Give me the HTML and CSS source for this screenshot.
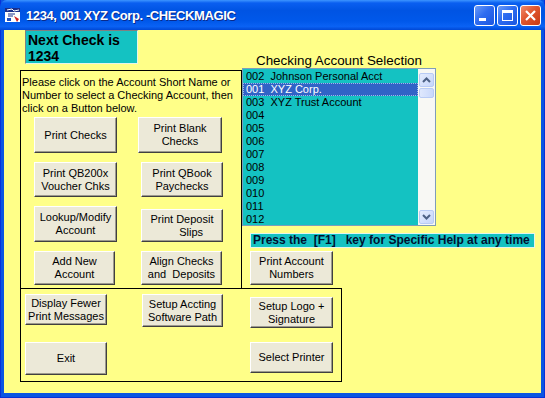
FILE: index.html
```html
<!DOCTYPE html>
<html lang="en">
<head>
    <meta charset="UTF-8">
    <title>1234, 001 XYZ Corp. -CHECKMAGIC</title>
    <link rel="stylesheet" href="styles.css">
</head>
<body>
    <div class="window">
        <header class="titlebar">
            <svg class="app-icon" width="16" height="16" viewBox="0 0 16 16">
                <rect x="0" y="1" width="15" height="14" fill="#ffffff"/>
                <rect x="0" y="1" width="15" height="4" fill="#1a2f8a"/>
                <path d="M2 3 L7 2 L9 4 L14 3" stroke="#ffffff" stroke-width="1" fill="none"/>
                <path d="M3 7 L10 7 M3 9 L8 9" stroke="#1a2f8a" stroke-width="1"/>
                <path d="M9 9 L12 15 L14 12 Z" fill="#d02020"/>
                <rect x="2" y="11" width="4" height="3" fill="#2050c0"/>
            </svg>
            <span class="title">1234, 001 XYZ Corp. -CHECKMAGIC</span>
            <div class="caption-buttons">
                <div class="cap-btn"><span class="glyph-min"></span></div>
                <div class="cap-btn"><span class="glyph-max"></span></div>
                <div class="cap-btn close">
                    <svg width="13" height="13" viewBox="0 0 13 13"><path d="M2 2 L11 11 M11 2 L2 11" stroke="#ffffff" stroke-width="2.2"/></svg>
                </div>
            </div>
        </header>

        <main class="client">
            <div class="top-row">
                <div class="next-check">Next Check is<br>1234</div>
                <div class="list-caption">Checking Account Selection</div>
            </div>

            <div class="middle-row">
                <section class="group upper">
                    <p class="hint">Please click on the Account Short Name or<br>Number to select a Checking Account, then<br>click on a Button below.</p>
                    <div class="btn-grid">
                        <button class="btn w83 h36">Print Checks</button>
                        <button class="btn w84 h36 shift-l">Print Blank<br>Checks</button>
                        <button class="btn w83 h35">Print QB200x<br>Voucher Chks</button>
                        <button class="btn w82 h35">Print QBook<br>Paychecks</button>
                        <button class="btn w83 h36">Lookup/Modify<br>Account</button>
                        <button class="btn w82 h33 down3">Print Deposit<br>&nbsp;&nbsp;&nbsp;&nbsp;&nbsp;&nbsp;Slips</button>
                        <button class="btn w81 h34">Add New<br>Account</button>
                        <button class="btn w81 h34">Align Checks<br>and&nbsp; Deposits</button>
                    </div>
                </section>

                <div class="account-side">
                    <div class="listbox">
                        <ul class="accounts">
                            <li>002  Johnson Personal Acct</li>
                            <li class="selected">001  XYZ Corp.</li>
                            <li>003  XYZ Trust Account</li>
                            <li>004</li>
                            <li>005</li>
                            <li>006</li>
                            <li>007</li>
                            <li>008</li>
                            <li>009</li>
                            <li>010</li>
                            <li>011</li>
                            <li>012</li>
                        </ul>
                        <div class="scrollbar">
                            <div class="scroll-btn">
                                <svg width="9" height="6" viewBox="0 0 9 6"><path d="M1 5 L4.5 1.5 L8 5" stroke="#4d6185" stroke-width="2" fill="none"/></svg>
                            </div>
                            <div class="scroll-thumb"></div>
                            <div class="scroll-track"></div>
                            <div class="scroll-btn">
                                <svg width="9" height="6" viewBox="0 0 9 6"><path d="M1 1 L4.5 4.5 L8 1" stroke="#4d6185" stroke-width="2" fill="none"/></svg>
                            </div>
                        </div>
                    </div>
                    <div class="help-bar">Press the  [F1]   key for Specific Help at any time</div>
                    <button class="btn w83 h34 print-numbers">Print Account<br>Numbers</button>
                </div>
            </div>

            <section class="group lower">
                <button class="btn w82 h31">Display Fewer<br>Print Messages</button>
                <button class="btn w81 h33">Setup Accting<br>Software Path</button>
                <button class="btn w83 h31 down3">Setup Logo +<br>Signature</button>
                <button class="btn w82 h33">Exit</button>
                <span></span>
                <button class="btn w83 h31">Select Printer</button>
            </section>
        </main>
    </div>
</body>
</html>
```

FILE: styles.css
```css
/* Reset */
* {
    margin: 0;
    padding: 0;
    box-sizing: border-box;
}

body {
    width: 545px;
    height: 398px;
    overflow: hidden;
    font-family: "Liberation Sans", Arial, sans-serif;
    font-size: 11px;
    color: #000000;
}

/* Window frame */
.window {
    width: 545px;
    height: 398px;
    display: flex;
    flex-direction: column;
    background: #0b55e2;
    border-left: 1px solid #0831d9;
    border-right: 1px solid #0831d9;
    border-bottom: 1px solid #0831d9;
}

.titlebar {
    height: 30px;
    display: flex;
    align-items: center;
    padding: 0 4px 0 4px;
    margin: 0 -1px;
    color: #ffffff;
    border-radius: 7px 7px 0 0;
    background: linear-gradient(to bottom, #3d95ff 0%, #0a5ff0 10%, #0054e3 35%, #0058ea 70%, #0a62f4 88%, #0048d6 100%);
}

.app-icon {
    margin: 0 5px 0 1px;
}

.title {
    flex: 1;
    font-size: 13px;
    font-weight: bold;
    letter-spacing: -0.4px;
    text-shadow: 1px 1px 0 #0a2a8a;
}

.caption-buttons {
    display: flex;
    gap: 2px;
}

.cap-btn {
    width: 21px;
    height: 21px;
    border: 1px solid #ffffff;
    border-radius: 3px;
    background: linear-gradient(135deg, #6b9cf8 0%, #2e6cf0 45%, #1b56e0 100%);
    display: flex;
    align-items: center;
    justify-content: center;
}

.cap-btn.close {
    background: linear-gradient(135deg, #f08a6a 0%, #e0562e 45%, #c83a14 100%);
}

.glyph-min {
    width: 7px;
    height: 3px;
    background: #ffffff;
    margin: 9px 5px 0 0;
}

.glyph-max {
    width: 11px;
    height: 11px;
    border: 1px solid #ffffff;
    border-top-width: 3px;
}

/* Client area */
.client {
    flex: 1;
    margin: 0 3px 4px 3px;
    background: #ffff88;
}

.top-row {
    height: 39px;
    display: flex;
}

.next-check {
    margin-left: 21px;
    width: 113px;
    height: 34px;
    padding: 1px 0 0 2px;
    background: #14c2c2;
    border: 1px solid;
    border-color: #808080 #e8f4e8 #e8f4e8 #808080;
    font-size: 14px;
    font-weight: bold;
    line-height: 16px;
}

.list-caption {
    align-self: flex-end;
    margin-left: 118px;
    font-size: 13.4px;
    line-height: 17px;
}

.middle-row {
    display: flex;
}

/* Group boxes */
.group {
    border: 1px solid #000000;
    margin-left: 16px;
}

.upper {
    width: 222px;
    height: 219px;
    margin-top: 1px;
}

.hint {
    padding: 5px 0 0 1px;
    line-height: 13px;
    white-space: nowrap;
}

.btn-grid {
    display: grid;
    grid-template-columns: 107px 84px;
    row-gap: 9px;
    margin: 2px 0 0 13px;
    align-items: start;
}

.lower {
    width: 322px;
    height: 94px;
    margin-top: -1px;
    padding: 5px 0 0 4px;
    display: grid;
    grid-template-columns: 117px 108px 83px;
    grid-template-rows: 48px auto;
    align-items: start;
}

/* Buttons */
.btn {
    display: flex;
    align-items: center;
    justify-content: center;
    text-align: center;
    font-family: "Liberation Sans", Arial, sans-serif;
    font-size: 11px;
    line-height: 13px;
    color: #000000;
    background: #ece9d8;
    border: 1px solid;
    border-color: #ffffff #404040 #404040 #ffffff;
    box-shadow: inset -1px -1px 0 #9d9a8e;
}

.w81 { width: 81px; }
.w82 { width: 82px; }
.w83 { width: 83px; }
.w84 { width: 84px; }
.h31 { height: 31px; }
.h33 { height: 33px; }
.h34 { height: 34px; }
.h35 { height: 35px; }
.h36 { height: 36px; }
.down3 { margin-top: 3px; }
.shift-l { margin-left: -3px; }

/* Account list */
.account-side {
    display: flex;
    flex-direction: column;
    margin-top: -1px;
}

.listbox {
    width: 194px;
    height: 158px;
    display: flex;
    background: #14c2c2;
    border: 1px solid #7f9db9;
}

.accounts {
    list-style: none;
    flex: 1;
    padding-top: 1px;
}

.accounts li {
    height: 13px;
    line-height: 13px;
    padding-left: 3px;
    white-space: pre;
}

.accounts li.selected {
    background: #3163c6;
    color: #ffffff;
    outline: 1px dotted #a0b8e8;
    outline-offset: -1px;
}

.scrollbar {
    width: 17px;
    display: flex;
    flex-direction: column;
    padding: 0 1px;
    background: #f8f8f4;
}

.scroll-btn {
    height: 14px;
    margin: 4px 0 0 0;
    display: flex;
    align-items: center;
    justify-content: center;
    background: linear-gradient(135deg, #e4ecfd 0%, #c6d6fb 100%);
    border: 1px solid #b8cbf5;
    border-radius: 2px;
}

.scroll-btn:last-child {
    margin: 0 0 1px 0;
}

.scroll-thumb {
    height: 10px;
    margin-top: 1px;
    background: linear-gradient(to right, #dfe8fd, #c9d8fb);
    border: 1px solid #b8cbf5;
    border-radius: 2px;
}

.scroll-track {
    flex: 1;
}

.help-bar {
    margin: 7px 0 0 8px;
    width: 285px;
    height: 15px;
    padding-left: 2px;
    background: #14c2c2;
    border: 1px solid #e4f4ec;
    font-size: 12px;
    font-weight: bold;
    line-height: 13px;
    white-space: pre;
    color: #001030;
}

.print-numbers {
    margin: 3px 0 0 8px;
}
```
